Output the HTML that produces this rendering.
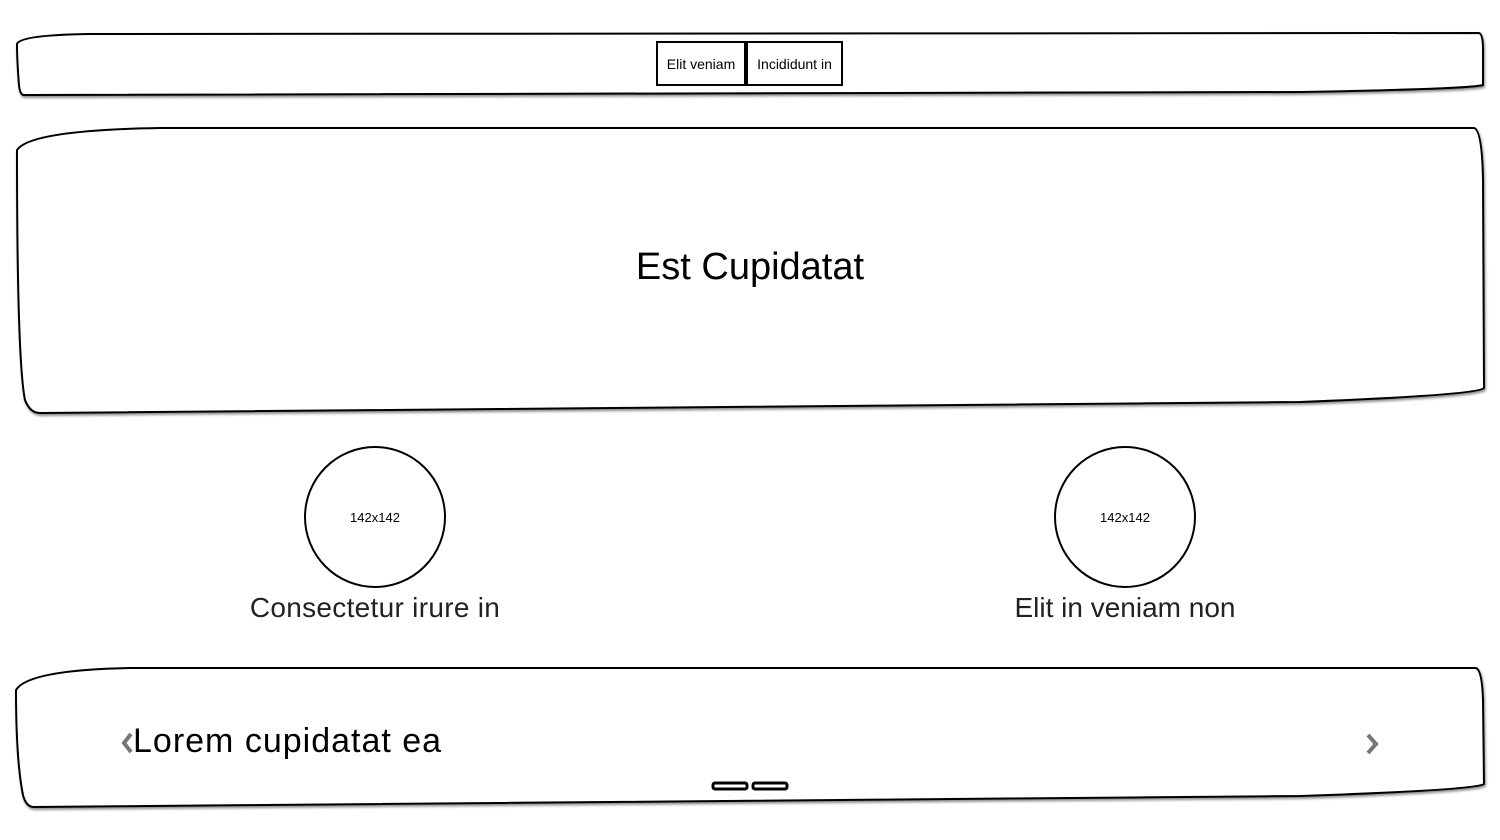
<!DOCTYPE html>
<html><head><meta charset="utf-8"><style>
html,body{margin:0;padding:0;background:#fff;width:1500px;height:840px;overflow:hidden;font-family:"Comic Sans MS","Liberation Sans",sans-serif;color:#000}
svg{position:absolute;left:0;top:0}
.t{position:absolute;white-space:nowrap}
</style></head><body>
<svg width="1500" height="840" viewBox="0 0 1500 840">
<defs><filter id="s" x="-5%" y="-5%" width="110%" height="120%"><feDropShadow dx="1" dy="2" stdDeviation="1.2" flood-color="#000" flood-opacity="0.45"/></filter></defs>
<g fill="#fff" stroke="#000" stroke-width="2" filter="url(#s)">
<path d="M17,44 Q20,35 90,34 L1479,33 Q1483,34 1483,50 L1483,85 Q1470,89 1300,92 L24,95 Q20,95 19,85 Q17,60 17,44 Z"/>
<path d="M17,150 Q30,130 160,128 L1474,128 Q1482,130 1483,180 L1484,388 Q1478,395 1300,402 L40,413 Q30,413 25,400 Q17,360 17,150 Z"/>
<path d="M16,690 Q28,670 130,668 L1476,668 Q1482,670 1483,700 L1484,784 Q1476,790 1300,796 L34,807 Q26,807 23,795 Q16,760 16,690 Z"/>
<rect x="657" y="42" width="88" height="43"/>
<rect x="747" y="42" width="95" height="43"/>
</g>
<g fill="#fff" stroke="#000" stroke-width="2">
<circle cx="375" cy="517" r="70"/>
<circle cx="1125" cy="517" r="70"/>
</g>
<g fill="#fff" stroke="#000" stroke-width="3">
<rect x="713" y="783" width="34" height="6" rx="2"/>
<rect x="753" y="783" width="34" height="6" rx="2"/>
</g>
<path d="M131,734 L124,743 L131,752" fill="none" stroke="#777" stroke-width="4"/>
<path d="M1368,735 L1376,744 L1368,753" fill="none" stroke="#777" stroke-width="4"/>
</svg>
<div class="t" style="left:657px;top:56px;width:88px;text-align:center;font-size:14px">Elit veniam</div>
<div class="t" style="left:747px;top:56px;width:95px;text-align:center;font-size:14px">Incididunt in</div>
<div class="t" style="left:550px;top:246px;width:400px;text-align:center;font-size:38px">Est Cupidatat</div>
<div class="t" style="left:305px;top:510px;width:140px;text-align:center;font-size:13px">142x142</div>
<div class="t" style="left:1055px;top:510px;width:140px;text-align:center;font-size:13px">142x142</div>
<div class="t" style="left:175px;top:592px;width:400px;text-align:center;font-size:28px;color:#222;letter-spacing:0.3px">Consectetur irure in</div>
<div class="t" style="left:925px;top:592px;width:400px;text-align:center;font-size:28px;color:#222">Elit in veniam non</div>
<div class="t" style="left:133px;top:722px;font-size:34px;letter-spacing:1px">Lorem cupidatat ea</div>
</body></html>
